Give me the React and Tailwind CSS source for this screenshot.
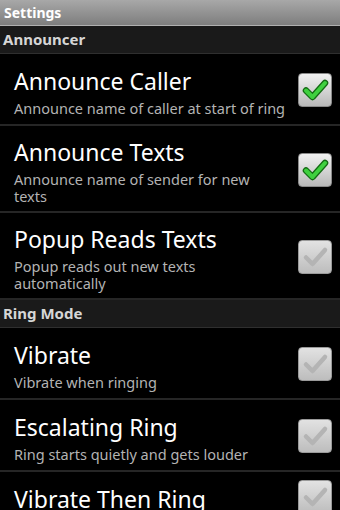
import React from "react";

const sections = [
  {
    title: "Announcer",
    items: [
      { title: "Announce Caller", sub: ["Announce name of caller at start of ring"], on: true },
      { title: "Announce Texts", sub: ["Announce name of sender for new", "texts"], on: true },
      { title: "Popup Reads Texts", sub: ["Popup reads out new texts", "automatically"], on: false },
    ],
  },
  {
    title: "Ring Mode",
    items: [
      { title: "Vibrate", sub: ["Vibrate when ringing"], on: false },
      { title: "Escalating Ring", sub: ["Ring starts quietly and gets louder"], on: false },
      { title: "Vibrate Then Ring", sub: [], on: false },
    ],
  },
];

const CheckBox = ({ on }) => (
  <div
    className={`w-[34px] h-[34px] -mt-[5px] rounded-[4px] border flex items-center justify-center ${
      on
        ? "bg-gradient-to-b from-[#f2f2f2] to-[#b9b9b9] border-[#8a8a8a]"
        : "bg-gradient-to-b from-[#e2e2e2] to-[#bdbdbd] border-[#9a9a9a]"
    }`}
  >
    <svg width="30" height="30" viewBox="0 0 30 30">
      {on ? (
        <>
          <path d="M6 15.5 L12.5 22 L25 8" fill="none" stroke="#136b13" strokeWidth="6.5" strokeLinecap="round" strokeLinejoin="round" />
          <path d="M6 15.5 L12.5 22 L25 8" fill="none" stroke="#3fd03f" strokeWidth="4" strokeLinecap="round" strokeLinejoin="round" />
        </>
      ) : (
        <path d="M6 15.5 L12.5 22 L25 8" fill="none" stroke="#b4b4b4" strokeWidth="4.5" strokeLinecap="round" strokeLinejoin="round" />
      )}
    </svg>
  </div>
);

const Row = ({ item }) => (
  <div
    className={`flex items-center border-b-2 border-[#262626] pl-[14px] pr-[8px] pt-[13px] pb-[6px] ${
      item.sub.length ? "min-h-[72px]" : ""
    }`}
  >
    <div className="flex-1 min-w-0">
      <div className="text-[23px] leading-[27px] text-white whitespace-nowrap">{item.title}</div>
      {item.sub.length > 0 && (
        <div className="mt-[5px] text-[14.5px] leading-[17px] text-[#b3b3b3]">
          {item.sub.map((line) => (
            <div key={line} className="whitespace-nowrap">{line}</div>
          ))}
        </div>
      )}
    </div>
    <CheckBox on={item.on} />
  </div>
);

export default function App() {
  return (
    <div
      className="w-[340px] h-[510px] overflow-hidden bg-black"
      style={{ fontFamily: '"Droid Sans", "Noto Sans", "Open Sans", sans-serif' }}
    >
      <div className="h-[26px] bg-gradient-to-b from-[#a8a8a8] to-[#7e7e7e] border-b border-[#b0b0b0] flex items-center px-[4px]">
        <span className="text-[14px] font-bold text-white">Settings</span>
      </div>
      {sections.map((s) => (
        <div key={s.title}>
          <div className="h-[28px] bg-[#1a1a1a] border-b border-[#2f2f2f] flex items-center px-[3px]">
            <span className="text-[15px] font-bold text-[#d6d6d6]">{s.title}</span>
          </div>
          {s.items.map((it) => (
            <Row key={it.title} item={it} />
          ))}
        </div>
      ))}
    </div>
  );
}
